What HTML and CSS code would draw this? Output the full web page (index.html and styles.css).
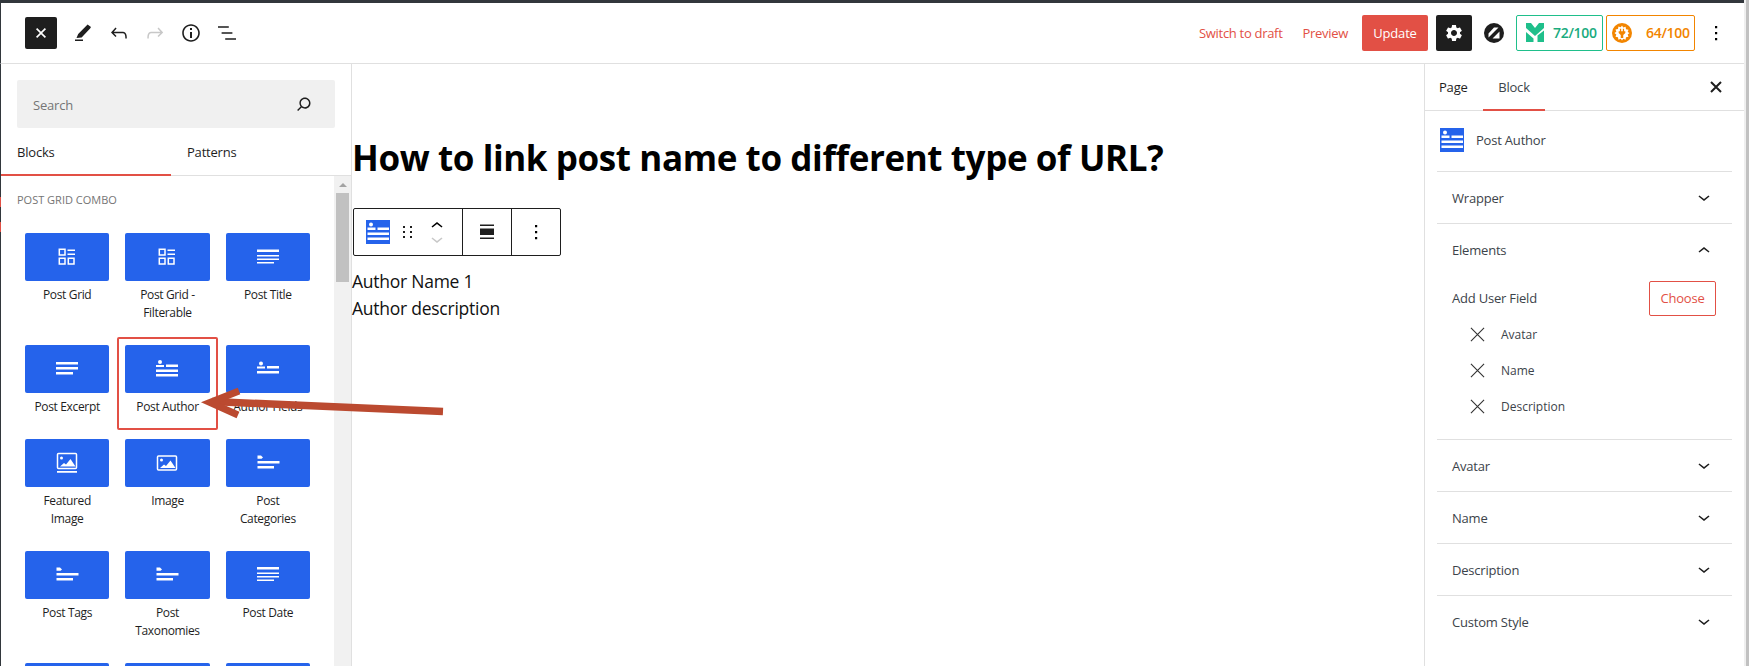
FILE: index.html
```html
<!DOCTYPE html>
<html lang="en">
<head>
<meta charset="utf-8">
<title>Edit Page</title>
<link rel="stylesheet" href="styles.css">
</head>
<body>
<svg class="defs" width="0" height="0" aria-hidden="true">
  <symbol id="i-grid" viewBox="0 0 24 24"><path fill="none" stroke="#fff" stroke-width="1.500" d="M4.300 4.300h5.700V10H4.300zM4.300 13.300h5.700V19H4.300zM13.300 13.300H19V19h-5.700z"/><path fill="#fff" d="M12.500 4.500H20V6h-7.500zM12.500 8.500H20V10h-7.500z"/></symbol>
  <symbol id="i-title" viewBox="0 0 24 24"><path fill="#fff" d="M1 4.500h22V7H1zM1 10h22v1.500H1zM1 13.500h22V15H1zM1 17h17v1.500H1z"/></symbol>
  <symbol id="i-date" viewBox="0 0 24 24"><path fill="#fff" d="M1 4h22v2.500H1zM1 9.500h22V11H1zM1 13h22v1.500H1zM1 16.500h17V18H1z"/></symbol>
  <symbol id="i-excerpt" viewBox="0 0 24 24"><path fill="#fff" d="M1 5h22v2.500H1zM1 10h22v2.500H1zM1 15h17v2.500H1z"/></symbol>
  <symbol id="i-author" viewBox="0 0 24 24"><circle cx="5" cy="5" r="2" fill="#fff"/><path fill="#fff" d="M1 8h8v2H1zM11 7.500h12V10H11zM1 12.500h22V15H1zM1 17h22v2.500H1z"/></symbol>
  <symbol id="i-fields" viewBox="0 0 24 24"><circle cx="5" cy="6.500" r="2" fill="#fff"/><path fill="#fff" d="M1 9.500h8v2H1zM11 9h12v2.500H11zM1 14h22v2.500H1z"/></symbol>
  <symbol id="i-cat" viewBox="0 0 24 24"><path fill="#fff" d="M1.500 4.500h3.500L7 6.500 5.500 7.800h-4zM1.500 10h22v2.500h-22zM1.500 15H18v2.500H1.500z"/></symbol>
  <symbol id="i-image" viewBox="0 0 24 24"><rect x="2.500" y="5" width="19" height="14" rx="1" fill="none" stroke="#fff" stroke-width="1.500"/><circle cx="6.500" cy="9" r="1.500" fill="#fff"/><path fill="#fff" d="M5 17l4-3.500 2 1.500 4.500-5.500 5 7.500z"/></symbol>
  <symbol id="i-feat" viewBox="0 0 24 24"><rect x="2.500" y="2.500" width="19" height="15" rx="1" fill="none" stroke="#fff" stroke-width="1.500"/><circle cx="6.500" cy="7" r="1.500" fill="#fff"/><path fill="#fff" d="M5 15.500l4-3.500 2 1.500 4.500-5.500 5 7.500zM2 20h20v1.800H2z"/></symbol>
  <symbol id="i-badge" viewBox="0 0 24 24"><rect width="24" height="24" fill="#2563eb"/><circle cx="5" cy="4.500" r="2" fill="#fff"/><path fill="#fff" d="M1.500 7.500h8V10h-8zM11.500 7.500H23V10H11.500zM1.500 12.500H23V15H1.500zM1.500 17.500H23V20H1.500z"/></symbol>
  <symbol id="i-down" viewBox="0 0 24 24"><path d="M17.500 10.600L12 15l-5.500-4.400.9-1.200L12 13l4.500-3.600z"/></symbol>
  <symbol id="i-up" viewBox="0 0 24 24"><path d="M6.500 13.400L12 9l5.500 4.400-.9 1.200L12 11l-4.500 3.600z"/></symbol>
  <symbol id="i-thin" viewBox="0 0 16 16"><path fill="none" stroke="#333" stroke-width="1.200" d="M1 1l14 14M15 1L1 15"/></symbol>
  <symbol id="i-dots" viewBox="0 0 24 24"><path d="M11 5h2.200v2.200H11zM11 11h2.200v2.200H11zM11 17h2.200v2.200H11z"/></symbol>
</svg>

<div class="app">
  <div class="page">
    <div class="topbar"></div>
    <header class="header">
      <button class="close-btn"><svg class="ico20" viewBox="0 0 24 24"><path fill="#fff" d="M12 10.600l4.600-4.600 1.400 1.400-4.600 4.600 4.600 4.600-1.400 1.400-4.600-4.600-4.600 4.600L6 16.600l4.600-4.600L6 7.400 7.400 6z"/></svg></button>
      <span class="tool"><svg class="ico24" viewBox="0 0 24 24"><path fill="#1e1e1e" d="M4 20h8v-1.600H4zM16.600 3.500l3.400 2.500-.9 1.500L10.600 16.500 5.500 17l1.700-4z"/></svg></span>
      <span class="tool"><svg class="ico24" viewBox="0 0 24 24"><path fill="#1e1e1e" d="M18.300 11.700c-.6-.6-1.400-.9-2.300-.9H6.700l2.900-3.300-1.100-1-4.500 5L8.500 16l1-1-2.700-2.700H16c.5 0 .9.200 1.300.5 1 1 1 3.400 1 4.500v.3h1.500v-.2c0-1.500 0-4.300-1.500-5.700z"/></svg></span>
      <span class="tool"><svg class="ico24" viewBox="0 0 24 24"><path fill="#c8c8c8" d="M15.600 6.500l-1.100 1 2.900 3.300H8c-.9 0-1.700.3-2.300.9-1.400 1.500-1.400 4.200-1.400 5.600v.2h1.500v-.3c0-1.100 0-3.500 1-4.500.3-.3.7-.5 1.300-.5h9.200L14.500 15l1.100 1.100 4.600-4.600-4.600-5z"/></svg></span>
      <span class="tool"><svg class="ico24" viewBox="0 0 24 24"><path fill="#1e1e1e" d="M12 3.200c-4.800 0-8.800 3.900-8.800 8.800 0 4.800 3.900 8.800 8.800 8.800 4.800 0 8.800-3.900 8.800-8.800 0-4.800-4-8.800-8.800-8.800zm0 16c-4 0-7.200-3.300-7.200-7.200C4.800 8 8 4.800 12 4.800s7.200 3.300 7.200 7.200c0 4-3.200 7.200-7.200 7.200zM11 17h2v-6h-2v6zm0-8h2V7h-2v2z"/></svg></span>
      <span class="tool"><svg class="ico24" viewBox="0 0 24 24"><path fill="#1e1e1e" d="M13.800 5.200H3v1.500h10.800V5.200zm-3.600 12v1.500H21v-1.500H10.200zm7.200-6H6.600v1.500h10.800v-1.500z"/></svg></span>
      <div class="header-right">
        <a class="hd-link gap-draft">Switch to draft</a>
        <a class="hd-link gap-preview">Preview</a>
        <button class="update-btn">Update</button>
        <button class="cog-btn"><svg class="ico20" viewBox="0 0 24 24"><path fill="#fff" d="M19.140 12.940c.04-.3.06-.61.06-.94 0-.32-.02-.64-.07-.94l2.030-1.580c.18-.14.23-.41.12-.61l-1.920-3.320c-.12-.22-.37-.29-.59-.22l-2.390.96c-.5-.38-1.030-.7-1.620-.94l-.36-2.540c-.04-.24-.24-.41-.48-.41h-3.840c-.24 0-.43.17-.47.41l-.36 2.540c-.59.24-1.130.57-1.620.94l-2.390-.96c-.22-.08-.47 0-.59.22L2.740 8.870c-.12.21-.08.47.12.61l2.030 1.580c-.05.3-.09.63-.09.94s.02.64.07.94l-2.030 1.580c-.18.14-.23.41-.12.61l1.920 3.320c.12.22.37.29.59.22l2.390-.96c.5.38 1.030.7 1.620.94l.36 2.540c.05.24.24.41.48.41h3.840c.24 0 .44-.17.47-.41l.36-2.540c.59-.24 1.130-.56 1.620-.94l2.390.96c.22.08.47 0 .59-.22l1.920-3.320c.12-.22.07-.47-.12-.61l-2.010-1.580zM12 15.600c-1.980 0-3.600-1.620-3.600-3.600s1.620-3.600 3.600-3.600 3.600 1.620 3.600 3.600-1.620 3.600-3.600 3.600z"/></svg></button>
        <svg class="stripe-logo" viewBox="0 0 20 20"><circle cx="10" cy="10" r="10" fill="#1e1e1e"/><path fill="#fff" d="M4.500 10.500L10 4.500h4.500L4.500 14.500zM15.500 8.500v7H8.500z"/></svg>
        <div class="score score-green">
          <svg class="score-ico" viewBox="0 0 18 19"><path fill="#1fbf8b" d="M0 0h5l4 5 4-5h5v5l-9 8-9-8zM0 9l7.500 6.500V19H0zM11.500 12.500L18 7.500V19h-6.500z"/></svg>
          <span>72/100</span>
        </div>
        <div class="score score-orange">
          <svg class="score-ico-lg" viewBox="0 0 24 24"><circle cx="12" cy="12" r="12" fill="#f28500"/><path fill="#fff" d="M12 3l1.500 2.500 2.800-1 .5 3 3 .5-1 2.800L21 12l-2.200 1.700 1 2.800-3 .5-.5 3-2.800-1L12 21l-1.500-2-2.800 1-.5-3-3-.5 1-2.800L3 12l2.200-1.500-1-2.800 3-.5.5-3 2.800 1z"/><path fill="#f28500" d="M9.500 7h1.500v3h2V7h1.500v3H16v2l-2.500 2.500V18h-3v-3.500L8 12v-2h1.500z"/></svg>
          <span>64/100</span>
        </div>
        <svg class="ico24 dots-main" viewBox="0 0 24 24"><use href="#i-dots"/></svg>
      </div>
    </header>

    <main class="main">
      <div class="edge"></div>
      <aside class="inserter">
        <div class="search"><span>Search</span><svg class="search-ico" viewBox="0 0 24 24"><path fill="#1e1e1e" d="M13 5c-3.300 0-6 2.700-6 6 0 1.400.5 2.700 1.300 3.700l-3.800 3.800 1.100 1.100 3.800-3.800c1 .8 2.300 1.300 3.700 1.300 3.300 0 6-2.700 6-6S16.300 5 13 5zm0 10.500c-2.500 0-4.500-2-4.500-4.500s2-4.500 4.500-4.500 4.500 2 4.500 4.500-2 4.500-4.500 4.500z"/></svg></div>
        <div class="ins-tabs">
          <div class="ins-tab active">Blocks</div>
          <div class="ins-tab">Patterns</div>
        </div>
        <div class="ins-body">
          <div class="ins-list">
            <div class="cat-title">POST GRID COMBO</div>
            <div class="block-grid">
              <div class="block-item"><div class="tile"><svg class="tile-ico"><use href="#i-grid"/></svg></div><div class="block-label">Post Grid</div></div>
              <div class="block-item"><div class="tile"><svg class="tile-ico"><use href="#i-grid"/></svg></div><div class="block-label">Post Grid - Filterable</div></div>
              <div class="block-item"><div class="tile"><svg class="tile-ico"><use href="#i-title"/></svg></div><div class="block-label">Post Title</div></div>
              <div class="block-item"><div class="tile"><svg class="tile-ico"><use href="#i-excerpt"/></svg></div><div class="block-label">Post Excerpt</div></div>
              <div class="block-item marked"><div class="tile"><svg class="tile-ico"><use href="#i-author"/></svg></div><div class="block-label">Post Author</div></div>
              <div class="block-item"><div class="tile"><svg class="tile-ico"><use href="#i-fields"/></svg></div><div class="block-label">Author Fields</div></div>
              <div class="block-item"><div class="tile"><svg class="tile-ico"><use href="#i-feat"/></svg></div><div class="block-label narrow">Featured Image</div></div>
              <div class="block-item"><div class="tile"><svg class="tile-ico"><use href="#i-image"/></svg></div><div class="block-label">Image</div></div>
              <div class="block-item"><div class="tile"><svg class="tile-ico"><use href="#i-cat"/></svg></div><div class="block-label narrow">Post Categories</div></div>
              <div class="block-item"><div class="tile"><svg class="tile-ico"><use href="#i-cat"/></svg></div><div class="block-label">Post Tags</div></div>
              <div class="block-item"><div class="tile"><svg class="tile-ico"><use href="#i-cat"/></svg></div><div class="block-label narrow">Post Taxonomies</div></div>
              <div class="block-item"><div class="tile"><svg class="tile-ico"><use href="#i-date"/></svg></div><div class="block-label">Post Date</div></div>
              <div class="block-item"><div class="tile"></div></div>
              <div class="block-item"><div class="tile"></div></div>
              <div class="block-item"><div class="tile"></div></div>
            </div>
          </div>
          <div class="ins-scroll"><div class="scroll-up"></div><div class="scroll-thumb"></div></div>
        </div>
      </aside>

      <section class="editor">
        <h1 class="post-title">How to link post name to different type of URL?</h1>
        <div class="block-toolbar">
          <div class="tb-group tb-main">
            <svg class="ico24"><use href="#i-badge"/></svg>
            <svg class="drag" viewBox="0 0 12 16"><path fill="#1e1e1e" d="M1 2h2v2H1zM8 2h2v2H8zM1 7h2v2H1zM8 7h2v2H8zM1 12h2v2H1zM8 12h2v2H8z"/></svg>
            <div class="movers">
              <svg class="mover"><use href="#i-up"/></svg>
              <svg class="mover muted"><use href="#i-down"/></svg>
            </div>
          </div>
          <div class="tb-group tb-align"><svg class="ico24" viewBox="0 0 24 24"><path fill="#1e1e1e" d="M5 4.500h14V6H5zM5 8.500h14v6.500H5zM5 17.500h14V19H5z"/></svg></div>
          <div class="tb-group tb-more"><svg class="ico24"><use href="#i-dots"/></svg></div>
        </div>
        <div class="author-block">
          <div>Author Name 1</div>
          <div>Author description</div>
        </div>
      </section>

      <aside class="sidebar">
        <div class="side-tabs">
          <div class="side-tab">Page</div>
          <div class="side-tab active">Block</div>
          <svg class="side-close" viewBox="0 0 16 16"><path fill="none" stroke="#1e1e1e" stroke-width="2" d="M3 3l10 10M13 3L3 13"/></svg>
        </div>
        <div class="block-card">
          <svg class="ico24"><use href="#i-badge"/></svg>
          <span>Post Author</span>
        </div>
        <div class="panel"><span>Wrapper</span><svg class="ico24 chev"><use href="#i-down"/></svg></div>
        <div class="panel-open">
          <div class="panel"><span>Elements</span><svg class="ico24 chev"><use href="#i-up"/></svg></div>
          <div class="field-row"><span>Add User Field</span><button class="choose">Choose</button></div>
          <div class="el-row"><svg class="thin-x"><use href="#i-thin"/></svg><span>Avatar</span></div>
          <div class="el-row"><svg class="thin-x"><use href="#i-thin"/></svg><span>Name</span></div>
          <div class="el-row"><svg class="thin-x"><use href="#i-thin"/></svg><span>Description</span></div>
        </div>
        <div class="panel"><span>Avatar</span><svg class="ico24 chev"><use href="#i-down"/></svg></div>
        <div class="panel"><span>Name</span><svg class="ico24 chev"><use href="#i-down"/></svg></div>
        <div class="panel"><span>Description</span><svg class="ico24 chev"><use href="#i-down"/></svg></div>
        <div class="panel panel-last"><span>Custom Style</span><svg class="ico24 chev"><use href="#i-down"/></svg></div>
      </aside>
    </main>
  </div>
  <div class="page-scroll"></div>

  <svg class="annotation" viewBox="0 0 1749 666" aria-hidden="true">
    <path fill="none" stroke="#bb4a30" stroke-width="7.500" d="M443 411.500L212 401.500"/>
    <path fill="none" stroke="#bb4a30" stroke-width="7" d="M239 391L210 402.500 238 415"/>
  </svg>
</div>
</body>
</html>
```
FILE: styles.css
```css
* { box-sizing: border-box; }
html, body { margin: 0; height: 100%; overflow: hidden; }
body { font-family: "Open Sans", "Noto Sans", sans-serif; font-size: 13px; letter-spacing: -0.2px; color: #1e1e1e; background: #fff; }
button { font: inherit; letter-spacing: inherit; border: 0; padding: 0; cursor: pointer; }
.defs { display: block; height: 0; }

.app { position: relative; display: flex; width: 1749px; height: 666px; overflow: hidden; }
.page { flex: 1; min-width: 0; display: flex; flex-direction: column; }
.page-scroll { width: 5px; background: #c1c1c1; border-left: 2px solid #efefef; }
.annotation { position: absolute; left: 0; top: 0; width: 1749px; height: 666px; pointer-events: none; }

.ico20 { width: 20px; height: 20px; display: block; }
.ico24 { width: 24px; height: 24px; display: block; flex: none; }

.topbar { height: 3px; background: #32373c; flex: none; }
.header { height: 61px; flex: none; display: flex; align-items: center; padding: 0 16px 1px 24px; border-bottom: 1px solid #e0e0e0; border-left: 1px solid #32373c; }
.close-btn { width: 32px; height: 32px; margin-right: 8px; background: #1e1e1e; border-radius: 2px; display: flex; align-items: center; justify-content: center; }
.tool { width: 36px; height: 36px; display: flex; align-items: center; justify-content: center; }
.header-right { margin-left: auto; display: flex; align-items: center; }
.hd-link { color: #e25045; font-size: 13px; letter-spacing: -0.3px; white-space: nowrap; }
.gap-draft { margin-right: 20px; }
.gap-preview { margin-right: 14px; }
.update-btn { width: 66px; height: 36px; background: #e25045; color: #fff; border-radius: 2px; margin-right: 8px; }
.cog-btn { width: 36px; height: 36px; background: #1e1e1e; border-radius: 2px; margin-right: 12px; display: flex; align-items: center; justify-content: center; }
.stripe-logo { width: 20px; height: 20px; margin-right: 12px; }
.score { height: 36px; display: flex; align-items: center; border-radius: 2px; border: 1px solid; font-size: 14px; font-weight: 600; white-space: nowrap; letter-spacing: -0.3px; }
.score-green { width: 87px; margin-right: 3px; border-color: #1fbf8b; color: #1aab7e; padding-left: 9px; gap: 9px; }
.score-orange { width: 89px; margin-right: 9px; border-color: #f28500; color: #f28500; padding-left: 5px; gap: 14px; }
.score-ico { width: 18px; height: 19px; }
.score-ico-lg { width: 20px; height: 20px; }

.main { flex: 1; min-height: 0; display: flex; }
.edge { width: 1px; flex: none; background: linear-gradient(#32373c 0 133px, #e25045 133px 143px, #32373c 143px 158px, #e25045 158px 168px, #32373c 168px); }
.inserter { width: 351px; flex: none; border-right: 1px solid #e0e0e0; display: flex; flex-direction: column; }
.search { flex: none; width: 318px; height: 48px; margin: 16px 0 0 16px; padding: 2px 20px 0 16px; background: #f0f0f0; border-radius: 2px; display: flex; align-items: center; justify-content: space-between; color: #757575; font-size: 13px; }
.search-ico { width: 22px; height: 22px; display: block; margin-top: -2px; }
.ins-tabs { flex: none; height: 48px; display: flex; border-bottom: 1px solid #e0e0e0; }
.ins-tab { width: 170px; height: 48px; padding: 15px 0 0 16px; font-size: 13px; line-height: 18px; }
.ins-tab.active { border-bottom: 2px solid #e25045; }
.ins-body { flex: 1; min-height: 0; display: flex; }
.ins-list { flex: 1; min-width: 0; overflow: hidden; padding: 16px 0 0 16px; }
.cat-title { font-size: 11px; line-height: 16px; color: #757575; letter-spacing: 0; margin-bottom: 25px; }
.block-grid { display: grid; grid-template-columns: repeat(3, 1fr); width: 285px; margin-left: 8px; column-gap: 16px; row-gap: 23px; }
.block-item { position: relative; }
.tile { height: 48px; background: #2563eb; border-radius: 2px; display: flex; align-items: center; justify-content: center; }
.tile-ico { width: 24px; height: 24px; display: block; }
.block-label { margin-top: 5px; padding: 0 4px; font-size: 12px; line-height: 18px; letter-spacing: -0.35px; text-align: center; color: #1e1e1e; }
.block-label.narrow { padding: 0 7px; }
.marked::after { content: ""; position: absolute; inset: -8px -8px -14px -8px; border: 2px solid #e25045; border-radius: 2px; }
.ins-scroll { width: 17px; flex: none; background: #f1f1f1; display: flex; flex-direction: column; align-items: center; }
.scroll-up { width: 0; height: 0; margin: 7px 0 6px; border: 4px solid transparent; border-top: 0; border-bottom-color: #a3a3a3; }
.scroll-thumb { width: 13px; height: 89px; background: #c1c1c1; }

.editor { flex: 1; min-width: 0; }
.post-title { margin: 0; font-size: 35px; line-height: 46px; font-weight: 700; letter-spacing: -0.4px; color: #000; padding-top: 71px; height: 144px; white-space: nowrap; }
.block-toolbar { margin-left: 1px; width: 208px; height: 48px; display: flex; border: 1px solid #1e1e1e; border-radius: 2px; }
.tb-group { display: flex; align-items: center; border-right: 1px solid #1e1e1e; }
.tb-group:last-child { border-right: 0; }
.tb-main { width: 109px; padding-left: 12px; }
.tb-align { width: 49px; justify-content: center; }
.tb-more { flex: 1; justify-content: center; }
.drag { width: 12px; height: 16px; margin-left: 12px; }
.movers { margin-left: 11px; display: flex; flex-direction: column; }
.mover { width: 24px; height: 24px; display: block; margin: -4px 0; }
.mover.muted { fill: #c8c8c8; margin-top: -5px; }
.author-block { margin-top: 12px; font-size: 17.5px; line-height: 27px; letter-spacing: -0.25px; color: #111; }

.sidebar { width: 320px; flex: none; border-left: 1px solid #e0e0e0; display: flex; flex-direction: column; color: #3c434a; }
.side-tabs { flex: none; height: 47px; display: flex; align-items: flex-start; padding-left: 14px; border-bottom: 1px solid #e0e0e0; color: #1e1e1e; }
.side-tab { height: 47px; padding-top: 14px; line-height: 18px; font-size: 13px; }
.side-tab:first-child { width: 44px; }
.side-tab.active { width: 62px; text-align: center; border-bottom: 2px solid #e25045; color: #3c434a; }
.side-close { width: 16px; height: 16px; display: block; margin: 15px 20px 0 auto; }
.block-card { flex: none; height: 61px; margin: 0 12px; padding: 0 0 3px 3px; display: flex; align-items: center; gap: 12px; font-size: 13px; border-bottom: 1px solid #e0e0e0; }
.panel { flex: none; height: 52px; margin: 0 12px; padding: 0 16px 0 15px; display: flex; align-items: center; justify-content: space-between; font-size: 13px; border-bottom: 1px solid #e0e0e0; }
.panel-last { border-bottom: 0; }
.chev { fill: #1e1e1e; }
.panel-open { flex: none; height: 216px; margin: 0 12px; border-bottom: 1px solid #e0e0e0; }
.panel-open .panel { margin: 0; border: 0; height: 52px; }
.field-row { height: 40px; padding: 4px 16px 0 15px; display: flex; align-items: center; justify-content: space-between; }
.choose { width: 67px; height: 35px; background: #fff; border: 1px solid #e25045; border-radius: 2px; color: #e25045; font-size: 13px; }
.el-row { height: 36px; display: flex; align-items: center; padding-left: 33px; gap: 16px; font-size: 12px; letter-spacing: 0; }
.thin-x { width: 15px; height: 15px; display: block; }
```
